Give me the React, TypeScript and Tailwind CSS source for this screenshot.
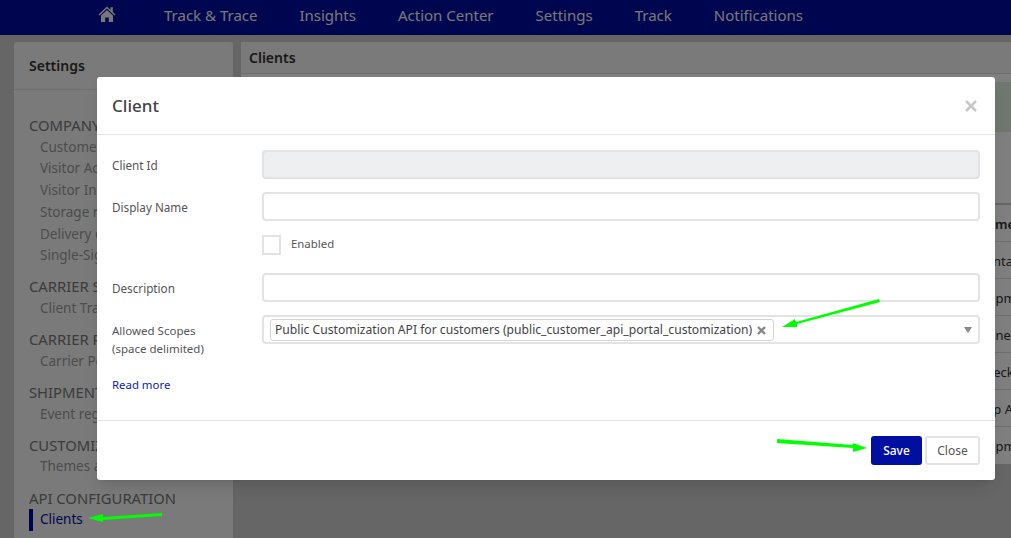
const navItems = ["Track & Trace", "Insights", "Action Center", "Settings", "Track", "Notifications"];

const sideGroups = [
  { title: "COMPANY", links: ["Customer", "Visitor Access", "Visitor Insights", "Storage rules", "Delivery options", "Single-Sign-On"] },
  { title: "CARRIER SETTINGS", links: ["Client Tracking"] },
  { title: "CARRIER PORTAL", links: ["Carrier Permissions"] },
  { title: "SHIPMENT EVENTS", links: ["Event registration"] },
  { title: "CUSTOMIZATION", links: ["Themes and layout"] },
];

const tableRows = ["Contact", "Shipment", "Signed", "Check", "App API", "Shipment"];

function Field({ label, disabled }: { label: string; disabled?: boolean }) {
  return (
    <div className="flex items-center">
      <label className="w-[150px] shrink-0 pt-[2px] text-[11.7px] text-[#555]">{label}</label>
      <div className={`h-[29px] flex-1 rounded-[4px] border-2 border-[#e2e3e5] ${disabled ? "bg-[#eeeff0]" : "bg-white"}`} />
    </div>
  );
}

export default function App() {
  return (
    <div className="relative h-[538px] w-[1011px] overflow-hidden bg-[#cccccc] font-['Noto_Sans','Open_Sans',sans-serif] text-[#333]">
      <nav className="flex h-[35px] items-center bg-[#000b9f] pb-[4px] pl-[98px] text-[15px] text-[#f0f0f0]">
        <svg className="mb-[3px] mr-[48px] h-[17px] w-[18px]" viewBox="0 0 18 17" fill="#f0f0f0" aria-hidden="true">
          <path d="M9 0.5 0.5 8.5l1 1L9 2.6l7.5 6.9 1-1-2.7-2.5V1.2h-2.3v2.7z" />
          <path d="M3 9.6 9 4.1l6 5.5V16h-4.2v-4.4H7.2V16H3z" />
        </svg>
        <div className="flex gap-[42px]">
          {navItems.map((item) => (
            <span key={item}>{item}</span>
          ))}
        </div>
      </nav>

      <div className="flex gap-[8px] pl-[14px] pt-[7px]">
        <aside className="h-[500px] w-[219px] shrink-0 rounded-t-[3px] bg-[#f5f5f5]">
          <div className="flex h-[48px] items-center border-b border-[#dddddd] pl-[15px] text-[14px] font-semibold">Settings</div>
          <div className="pl-[15px] pt-[25px]">
            {sideGroups.map((group) => (
              <div key={group.title} className="mb-[9.4px]">
                <div className="whitespace-nowrap text-[14.8px] leading-[21.7px] text-[#777]">{group.title}</div>
                {group.links.map((link) => (
                  <div key={link} className="whitespace-nowrap pl-[11px] text-[13.5px] leading-[21.7px] text-[#999]">{link}</div>
                ))}
              </div>
            ))}
            <div className="whitespace-nowrap text-[14.8px] leading-[21.7px] text-[#777]">API CONFIGURATION</div>
            <div className="border-l-[4px] border-[#000b9f] pl-[7px] text-[13.5px] leading-[21.7px] text-[#000b9f]">Clients</div>
          </div>
        </aside>

        <main className="flex h-[422px] w-[770px] shrink-0 flex-col overflow-hidden bg-[#f5f5f5]">
          <div className="flex h-[32px] items-center border-b border-[#ddd] pl-[8px] text-[14px] font-semibold">Clients</div>
          <div className="flex-1 bg-white">
            <div className="mt-[8px] h-[50px] bg-[#dcf0dc]" />
            <div className="mt-[71px] h-[38px] border-t-2 border-[#ccc] pl-[736px] pt-[10px] text-[13px] font-semibold whitespace-nowrap">Name</div>
            {tableRows.map((row) => (
              <div key={row} className="h-[37px] border-t border-[#ddd] pl-[736px] pt-[10px] text-[13px] whitespace-nowrap">{row}</div>
            ))}
          </div>
        </main>
      </div>

      <div className="absolute inset-0 bg-black/50" />

      <div className="absolute left-[97px] top-[77px] h-[403px] w-[898px] rounded-[3px] bg-white shadow-lg">
        <div className="flex h-[58px] items-center justify-between border-b border-[#e5e5e5] pl-[15px] pr-[18px]">
          <h2 className="text-[17px] font-medium text-[#444]">Client</h2>
          <svg className="h-[12px] w-[12px]" viewBox="0 0 12 12" stroke="#c8c8c8" strokeWidth="2.6" aria-hidden="true">
            <path d="M1 1l10 10M11 1L1 11" />
          </svg>
        </div>

        <div className="flex flex-col px-[15px] pt-[15px]">
          <Field label="Client Id" disabled />
          <div className="mt-[13px]">
            <Field label="Display Name" />
          </div>
          <div className="ml-[150px] mt-[14px] flex items-center gap-[10px]">
            <div className="h-[20px] w-[19px] border-2 border-[#e2e3e5]" />
            <span className="pb-[2px] text-[11.4px] text-[#555]">Enabled</span>
          </div>
          <div className="mt-[18px]">
            <Field label="Description" />
          </div>
          <div className="mt-[13px] flex">
            <label className="w-[150px] shrink-0 pt-[7px] text-[11.5px] leading-[18px] text-[#555]">
              Allowed Scopes
              <br />
              (space delimited)
            </label>
            <div className="flex h-[29px] flex-1 items-center justify-between rounded-[4px] border-2 border-[#e2e3e5] pl-[6px] pr-[6px]">
              <div className="flex h-[22px] items-center gap-[5px] whitespace-nowrap rounded-[3px] border border-[#d5d5d5] pl-[4px] pr-[7px] pt-[1px] text-[12.15px] text-[#444]">
                Public Customization API for customers (public_customer_api_portal_customization)
                <svg className="h-[9px] w-[9px]" viewBox="0 0 9 9" stroke="#888" strokeWidth="2.4" aria-hidden="true">
                  <path d="M1 1l7 7M8 1L1 8" />
                </svg>
              </div>
              <span className="h-0 w-0 border-x-[4px] border-t-[6px] border-x-transparent border-t-[#888]" />
            </div>
          </div>
          <a className="mt-[18px] text-[11.4px] text-[#0b20b5]">Read more</a>
        </div>

        <div className="absolute inset-x-0 bottom-0 flex h-[60px] items-center justify-end gap-[3px] border-t border-[#e5e5e5] pr-[15px]">
          <button className="h-[29px] w-[51px] rounded-[3px] bg-[#000f9f] text-[12px] font-medium text-white">Save</button>
          <button className="h-[29px] w-[55px] rounded-[3px] border-2 border-[#e2e3e5] bg-white text-[12px] text-[#555]">Close</button>
        </div>
      </div>

      {/* green annotation arrows drawn over the screenshot */}
      <svg className="absolute left-[781px] top-[298px] h-[30px] w-[100px]" viewBox="0 0 100 30" fill="#00ff00" aria-hidden="true">
        <polygon points="98,1 99,4 16,26 16,29 1,29 14,21 15,24" />
      </svg>
      <svg className="absolute left-[776px] top-[438px] h-[16px] w-[92px]" viewBox="0 0 92 16" fill="#00ff00" aria-hidden="true">
        <polygon points="1,1 77,7 77,5 91,10 77,14 77,10 1,5" />
      </svg>
      <svg className="absolute left-[87px] top-[512px] h-[12px] w-[76px]" viewBox="0 0 76 12" fill="#00ff00" aria-hidden="true">
        <polygon points="1,6 16,2 16,5 75,1 75,4 16,8 16,10" />
      </svg>
    </div>
  );
}
